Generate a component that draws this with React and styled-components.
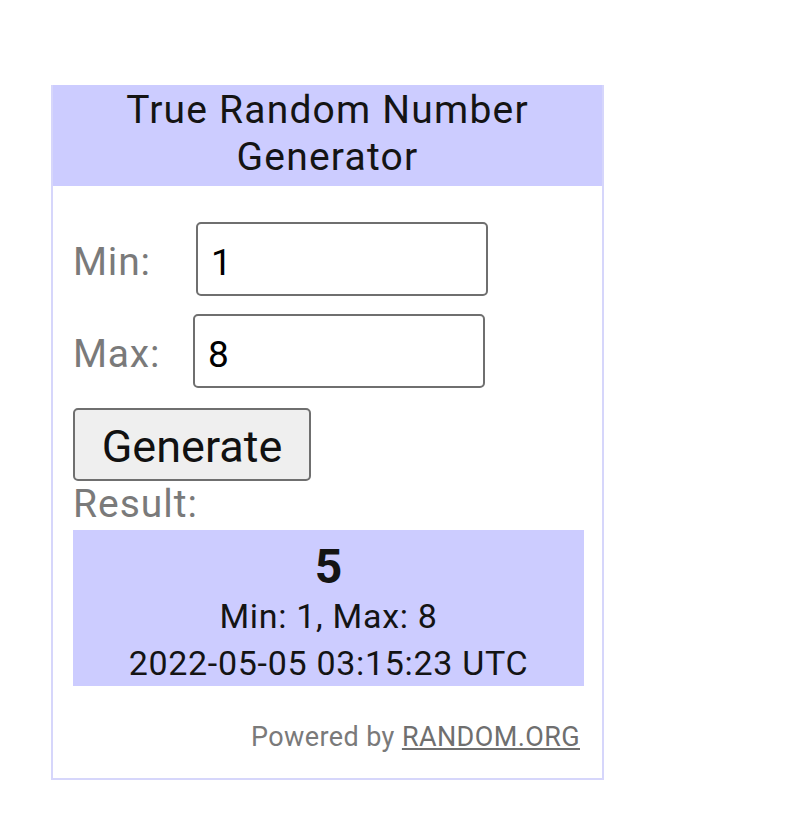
import React from "react";
import styled, { createGlobalStyle } from "styled-components";

const GlobalStyle = createGlobalStyle`
  body {
    margin: 0;
    background: #ffffff;
    font-family: Roboto, "Noto Sans", sans-serif;
  }
`;

const Page = styled.div`
  padding: 85px 0 0 51px;
`;

const Widget = styled.div`
  width: 549px;
  border: 2px solid #d6d6fb;
  border-top: none;
  background: #ffffff;
`;

const Header = styled.div`
  background: #ccccff;
  color: #141414;
  text-align: center;
  font-size: 39px;
  letter-spacing: 1.2px;
  line-height: 47px;
  padding: 2px 0 5px;
`;

const Body = styled.div`
  padding: 36px 17px 23px 20px;
`;

const Row = styled.div`
  display: flex;
  align-items: baseline;
  margin-bottom: ${(p) => p.$after}px;
`;

const Label = styled.label`
  width: ${(p) => p.$w}px;
  color: #7a7a7a;
  font-size: 39px;
  letter-spacing: 0.8px;
`;

const Input = styled.input`
  box-sizing: border-box;
  width: 292px;
  height: 74px;
  padding: 6px 13px 0;
  border: 2px solid #6f6f6f;
  border-radius: 5px;
  font-family: inherit;
  font-size: 37px;
  color: #000000;
  background: #ffffff;
`;

const Button = styled.button`
  box-sizing: border-box;
  width: 238px;
  height: 73px;
  padding: 3px 0 0;
  border: 2px solid #6f6f6f;
  border-radius: 5px;
  background: #efefef;
  font-family: inherit;
  font-size: 45px;
  color: #111111;
`;

const ResultLabel = styled.div`
  color: #7a7a7a;
  font-size: 39px;
  letter-spacing: 1px;
  line-height: 47px;
  margin-bottom: 2px;
`;

const ResultBox = styled.div`
  box-sizing: border-box;
  width: 511px;
  height: 156px;
  padding-top: 10px;
  background: #ccccff;
  color: #141414;
  text-align: center;
`;

const Number = styled.div`
  font-size: 48px;
  font-weight: 700;
  line-height: 53px;
`;

const Line = styled.div`
  font-size: 34px;
  letter-spacing: 0.7px;
  line-height: 47px;
`;

const Powered = styled.div`
  margin-top: 33px;
  padding-right: 5px;
  text-align: right;
  color: #7a7a7a;
  font-size: 27px;
  letter-spacing: 0.4px;
  line-height: 36px;

  a {
    color: #6f6f6f;
    text-decoration: underline;
  }
`;

export default function App() {
  return (
    <Page>
      <GlobalStyle />
      <Widget>
        <Header>
          True Random Number
          <br />
          Generator
        </Header>
        <Body>
          <Row $after={18}>
            <Label $w={123}>Min:</Label>
            <Input defaultValue="1" />
          </Row>
          <Row $after={20}>
            <Label $w={120}>Max:</Label>
            <Input defaultValue="8" />
          </Row>
          <Button>Generate</Button>
          <ResultLabel>Result:</ResultLabel>
          <ResultBox>
            <Number>5</Number>
            <Line>Min: 1, Max: 8</Line>
            <Line>2022-05-05 03:15:23 UTC</Line>
          </ResultBox>
          <Powered>
            Powered by <a href="#">RANDOM.ORG</a>
          </Powered>
        </Body>
      </Widget>
    </Page>
  );
}
